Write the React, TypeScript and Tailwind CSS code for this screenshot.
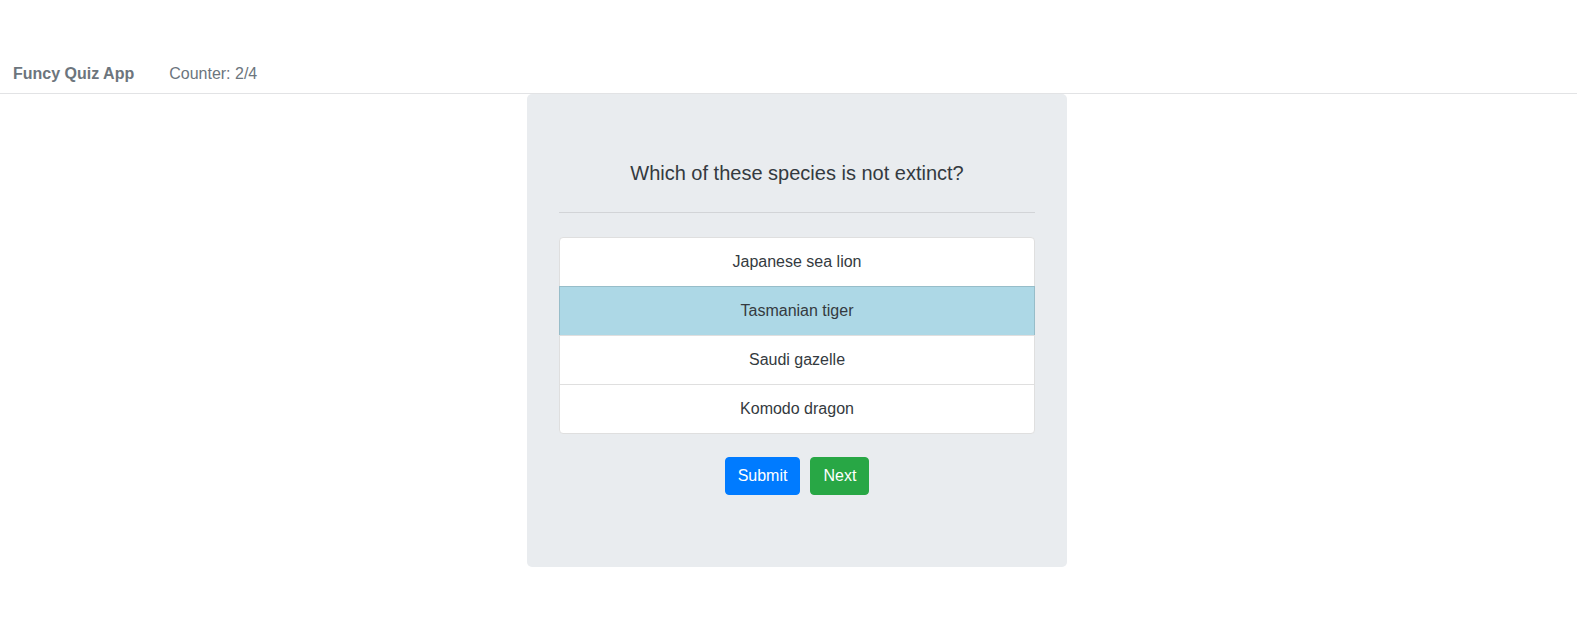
import { useState } from "react";

const answers = ["Japanese sea lion", "Tasmanian tiger", "Saudi gazelle", "Komodo dragon"];

export default function App() {
  const [selected, setSelected] = useState(1);

  return (
    <div className="min-h-screen bg-white font-['Liberation_Sans',Arial,sans-serif] text-[16px] leading-6">
      {/* Navbar */}
      <div className="h-[54px]" />
      <nav className="flex items-center pt-2 pb-[7px] px-[13px] border-b border-[#e2e3e5] text-[#6c757d]">
        <span className="font-bold">Funcy Quiz App</span>
        <span className="ml-[35px]">Counter: 2/4</span>
      </nav>

      {/* Quiz card */}
      <div className="flex justify-center pl-[17px]">
        <div className="w-[540px] flex flex-col bg-[#e9ecef] rounded-[5px] px-8 pt-16 pb-[72px]">
          <h5 className="text-[20px] leading-[30px] text-center text-[#343a40] mb-2">
            Which of these species is not extinct?
          </h5>
          <hr className="my-4 border-0 border-t border-[#d2d4d7]" />
          <div className="mt-2 flex flex-col rounded-[4px] border border-[#dfdfdf] bg-white">
            {answers.map((a, i) => (
              <div
                key={a}
                onClick={() => setSelected(i)}
                className={`flex items-center justify-center text-[#343a40] cursor-pointer ${
                  i === 0 ? "h-12 rounded-t-[3px]" : "h-[49px] border-t"
                } ${i === answers.length - 1 ? "rounded-b-[3px]" : ""} ${
                  i === selected
                    ? "bg-[#add8e6] border-[#97bdc9] border-x -mx-px"
                    : "border-[#dfdfdf]"
                }`}
              >
                {a}
              </div>
            ))}
          </div>
          <div className="mt-[23px] flex justify-center gap-[10px]">
            <button className="h-[38px] px-3 rounded-[4px] border border-[#007bff] bg-[#007bff] text-white">
              Submit
            </button>
            <button className="h-[38px] px-3 rounded-[4px] border border-[#28a745] bg-[#28a745] text-white">
              Next
            </button>
          </div>
        </div>
      </div>
    </div>
  );
}
